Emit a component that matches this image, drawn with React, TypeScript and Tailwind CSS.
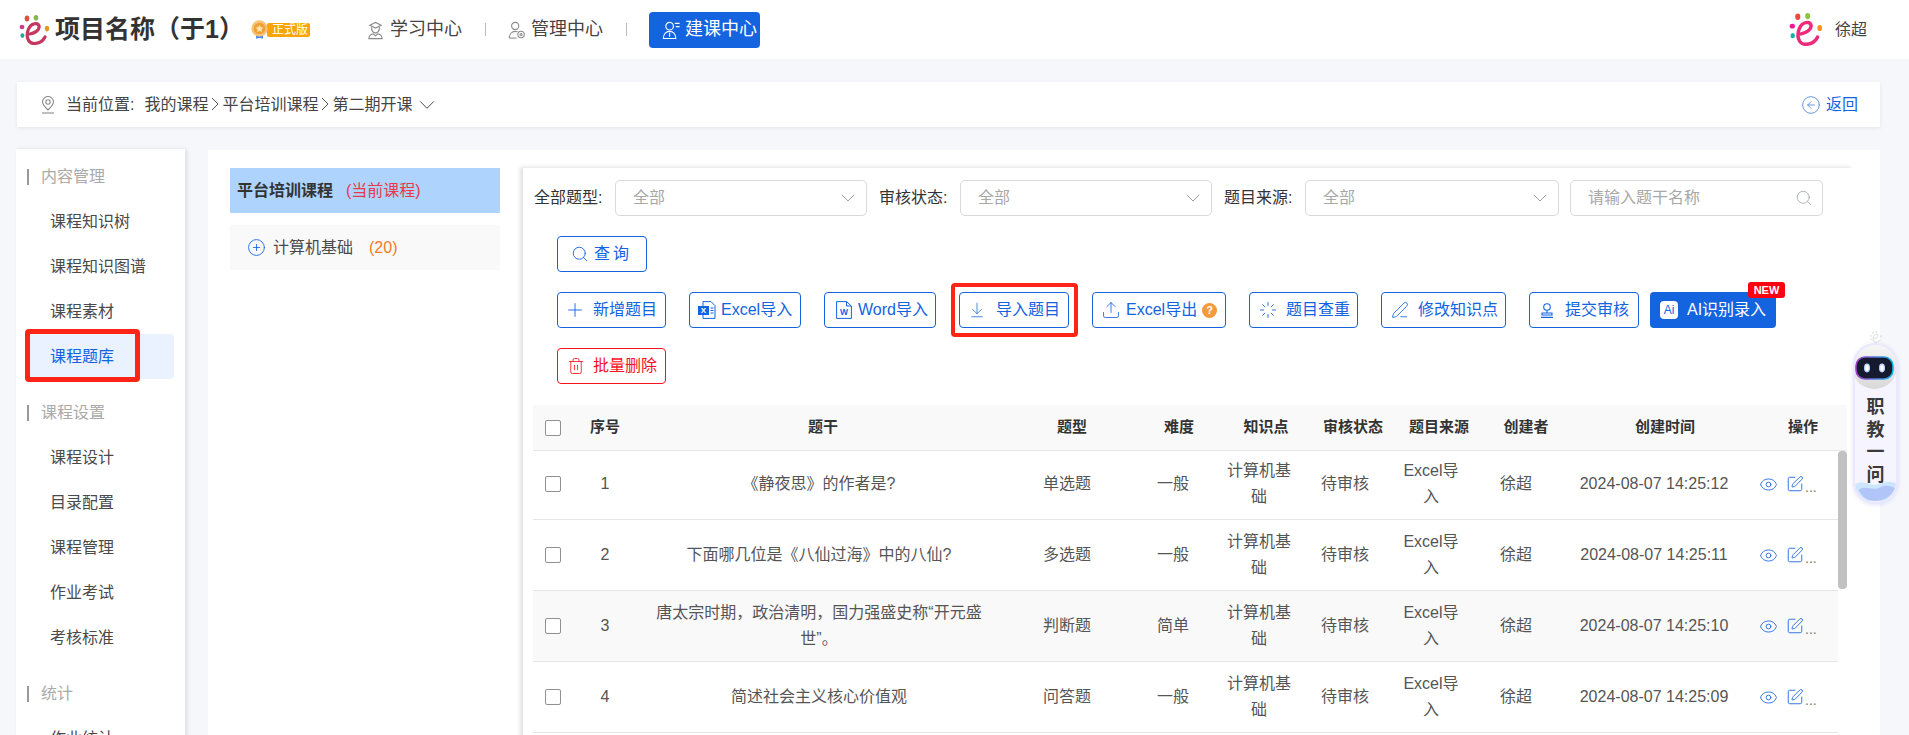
import { ArrowDownToLine, ChevronDown, CircleArrowLeft, CirclePlus, Eye, Loader, PenLine, Plus, Search, SquarePen, Trash2, Upload } from "lucide-react"

function Logo({ main, dots }: { main: string; dots: string[] }) {
    return (
        <svg viewBox="0 0 31 30" className="h-full w-full">
            <ellipse cx="8" cy="3.4" rx="2.3" ry="3" fill={dots[0]} />
            <ellipse cx="17" cy="2.8" rx="2.3" ry="2.8" fill={dots[1]} />
            <ellipse cx="3" cy="12" rx="2.4" ry="2.2" fill={dots[2]} />
            <ellipse cx="3.4" cy="20.6" rx="2" ry="2.4" fill={dots[3]} />
            <ellipse cx="28" cy="13.6" rx="2.2" ry="2.8" fill={dots[4]} />
            <path d="M11 19 C16 18 21 15 20 11 C19 7 12 8 9.5 14 C6.5 21 9 28.5 15 28.5 C20 28.5 24 26 26 22" fill="none" stroke={main} strokeWidth="3.2" strokeLinecap="round" />
        </svg>
    )
}

function Medal() {
    return (
        <svg viewBox="0 0 28 28" className="h-full w-full">
            <path d="M9 22 L9 27.5 L14 26 L19 27.5 L19 22 Z" fill="#3b82f6" />
            <circle cx="14" cy="12.5" r="12" fill="#f7c27a" />
            <circle cx="14" cy="12.5" r="8.5" fill="#f0a030" />
            <path d="M14 7 L15.8 10.7 L19.8 11.2 L16.9 13.9 L17.6 17.9 L14 16 L10.4 17.9 L11.1 13.9 L8.2 11.2 L12.2 10.7 Z" fill="#ffe3ad" />
        </svg>
    )
}

function StudyIcon() {
    return (
        <svg viewBox="0 0 18 20" className="h-[20px] w-[17px]" fill="none" stroke="#8a8a8a" strokeWidth="1.2">
            <path d="M3 5 L9 2 L15 5 L9 8 Z" />
            <path d="M5 7 C4.5 11 6.5 13 9 13 C11.5 13 13.5 11 13 7" />
            <path d="M2 19.2 C2 15.6 5 14.4 6.5 14 L9 16 L11.5 14 C13 14.4 16 15.6 16 19.2 Z" />
        </svg>
    )
}

function ManageIcon() {
    return (
        <svg viewBox="0 0 20 20" className="h-[20px] w-[19px]" fill="none" stroke="#8a8a8a" strokeWidth="1.2">
            <circle cx="8" cy="5.5" r="4" />
            <path d="M1.5 19 C1.5 14 4.5 11.5 8 11.5 C9 11.5 9.8 11.7 10.6 12" />
            <path d="M1.5 19 L9.5 19" />
            <circle cx="14.5" cy="15" r="3.6" />
            <circle cx="14.5" cy="15" r="1.2" />
        </svg>
    )
}

function BuildIcon() {
    return (
        <svg viewBox="0 0 20 20" className="h-[20px] w-[19px]" fill="none" stroke="#fff" strokeWidth="1.2">
            <circle cx="8" cy="6" r="4" />
            <path d="M1.5 19 C1.5 14 4.5 11.5 8 11.5 C11.5 11.5 14.5 14 14.5 19 Z" />
            <path d="M8 13 L8 17" />
            <path d="M13.5 3 L18.5 3 M14.5 6.5 L18.5 6.5" />
        </svg>
    )
}

function LocationIcon() {
    return (
        <svg viewBox="0 0 16 18" className="h-[18px] w-[16px]" fill="none" stroke="#8a8a8a" strokeWidth="1.1">
            <path d="M8 14 C4.5 10.5 2.5 8.4 2.5 6 A5.5 5.5 0 0 1 13.5 6 C13.5 8.4 11.5 10.5 8 14 Z" />
            <circle cx="8" cy="6" r="2.2" />
            <path d="M2 17 L14 17" />
        </svg>
    )
}

function Crumb() {
    return (
        <svg viewBox="0 0 14 16" className="h-[16px] w-[14px]" fill="none" stroke="#555" strokeWidth="1">
            <path d="M4 1 L10 7 L4 13" />
        </svg>
    )
}

function ExcelIcon() {
    return (
        <svg viewBox="0 0 18 18" className="h-[18px] w-[18px]">
            <path d="M5 .6 H13 L17 4.6 V17.4 H5 Z" fill="none" stroke="#1463df" strokeWidth="1" />
            <rect x="0" y="5" width="11" height="9" fill="#1463df" />
            <text x="5.5" y="12.4" textAnchor="middle" fontSize="8" fontWeight="700" fill="#fff">X</text>
            <path d="M12.5 7 H15.5 M12.5 9.5 H15.5 M12.5 12 H15.5" stroke="#1463df" strokeWidth="1" />
        </svg>
    )
}

function WordIcon() {
    return (
        <svg viewBox="0 0 16 18" className="h-[18px] w-[16px]">
            <path d="M.6 .6 H10.5 L15.4 5 V17.4 H.6 Z M10.5 .6 V5 H15.4" fill="none" stroke="#1463df" strokeWidth="1" />
            <text x="8" y="14.4" textAnchor="middle" fontSize="8.5" fontWeight="700" fill="#1463df">W</text>
        </svg>
    )
}

function StampIcon() {
    return (
        <svg viewBox="0 0 14 15" className="h-[15px] w-[14px]" fill="none" stroke="#1463df" strokeWidth="1.1">
            <circle cx="7" cy="4" r="3.3" />
            <path d="M7 7.4 L7 10 M2 10 H12 V12 H2 Z M1 14.4 H13" />
        </svg>
    )
}

function Robot() {
    return (
        <div className="absolute left-[1853px] top-[331px] flex w-[45px] flex-col items-center">
            <div className="h-[12px] w-[14px] opacity-30">
                <Logo main="#aaa" dots={["#aaa", "#aaa", "#aaa", "#aaa", "#aaa"]} />
            </div>
            <div className="relative flex h-[161px] w-[45px] flex-col items-center overflow-hidden rounded-full border-2 border-[#e9e8ff] bg-[#f6f5ff] shadow-[0_1px_4px_rgba(110,110,220,0.2)]">
                <svg viewBox="0 0 45 45" className="h-[45px] w-[45px] shrink-0">
                    <defs>
                        <linearGradient id="head" x1="0" y1="0" x2="0" y2="1">
                            <stop offset="0" stopColor="#f7f7f7" />
                            <stop offset="1" stopColor="#d9d9d9" />
                        </linearGradient>
                        <linearGradient id="rim" x1="0" y1="0" x2="1" y2="0">
                            <stop offset="0" stopColor="#a63fc9" />
                            <stop offset="1" stopColor="#12b5ee" />
                        </linearGradient>
                    </defs>
                    <circle cx="21.5" cy="21.5" r="22.5" fill="url(#head)" />
                    <rect x="3" y="12" width="37" height="22" rx="9" fill="#151a2e" stroke="url(#rim)" strokeWidth="1.6" />
                    <ellipse cx="14" cy="23" rx="3" ry="4.4" fill="#bcd6ff" />
                    <ellipse cx="14" cy="23" rx="1.7" ry="3" fill="#fff" />
                    <ellipse cx="29" cy="23" rx="3" ry="4.4" fill="#bcd6ff" />
                    <ellipse cx="29" cy="23" rx="1.7" ry="3" fill="#fff" />
                </svg>
                <div className="relative z-10 mt-[6px] flex flex-col items-center text-[18px] font-bold leading-[22.6px] text-[#3a3a3a]">
                    <span>职</span>
                    <span>教</span>
                    <span>一</span>
                    <span>问</span>
                </div>
                <svg viewBox="0 0 45 24" className="absolute bottom-0 left-0 h-[24px] w-[41px]">
                    <path d="M0 6 C10 0 16 8 24 6 C32 4 38 1 45 5 L45 24 L0 24 Z" fill="#bde0fc" opacity="0.75" />
                    <path d="M4 12 C12 6 20 14 28 9 C34 6 40 8 44 10 C40 20 30 24 22 24 C14 24 8 20 4 12 Z" fill="#a6b6f7" opacity="0.7" />
                </svg>
            </div>
        </div>
    )
}

const groups = [
    { title: "内容管理", items: ["课程知识树", "课程知识图谱", "课程素材", "课程题库"] },
    { title: "课程设置", items: ["课程设计", "目录配置", "课程管理", "作业考试", "考核标准"] },
    { title: "统计", items: ["作业统计"] },
]

const rows = [
    { id: 1, stem: "《静夜思》的作者是?", type: "单选题", level: "一般", time: "2024-08-07 14:25:12" },
    { id: 2, stem: "下面哪几位是《八仙过海》中的八仙?", type: "多选题", level: "一般", time: "2024-08-07 14:25:11" },
    { id: 3, stem: "唐太宗时期，政治清明，国力强盛史称“开元盛世”。", type: "判断题", level: "简单", time: "2024-08-07 14:25:10" },
    { id: 4, stem: "简述社会主义核心价值观", type: "问答题", level: "一般", time: "2024-08-07 14:25:09" },
]

function FilterSelect({ label, className }: { label: string; className: string }) {
    return (
        <>
            <span className="w-[81px] shrink-0 text-[#333]">{label}</span>
            <div className={`flex h-[36px] shrink-0 items-center justify-between rounded-[5px] border border-[#d9d9d9] pl-[17px] pr-[6px] text-[#a8a8a8] ${className}`}>
                <span>全部</span>
                <ChevronDown className="h-[24px] w-[24px] text-[#9a9fa8]" strokeWidth={1} />
            </div>
        </>
    )
}

function Btn({ className, children }: { className: string; children: React.ReactNode }) {
    return (
        <button className={`flex h-[36px] shrink-0 items-center rounded-[4px] border border-[#1463df] text-[#1463df] ${className}`}>
            {children}
        </button>
    )
}

export default function App() {
    return (
        <div className="relative h-screen overflow-hidden bg-[#f5f7fb] font-['Liberation_Sans','Noto_Sans_CJK_SC',sans-serif] text-[16px]">
            {/* Header */}
            <header className="flex h-[59px] items-center bg-white">
                <div className="ml-[19px] h-[30px] w-[31px] shrink-0">
                    <Logo main="#c4385f" dots={["#e0503f", "#86b64a", "#d13a8a", "#2ba79a", "#e39a1e"]} />
                </div>
                <span className="ml-[5px] w-[176px] shrink-0 whitespace-nowrap text-[25px] font-bold leading-none text-[#333]">项目名称（于1）</span>
                <div className="relative ml-[19px] h-[14px] w-[60px] shrink-0">
                    <div className="absolute left-[17px] top-0 flex h-[14px] w-[43px] items-center justify-center rounded-[2px] bg-[#fba505] pl-[3px] text-[12px] leading-none text-white">正式版</div>
                    <div className="absolute -top-[3px] left-0 h-[19px] w-[19px]"><Medal /></div>
                </div>
                <div className="ml-[57px] flex w-[95px] shrink-0 items-center gap-[6px] text-[18px] text-[#444]">
                    <StudyIcon />
                    <span className="whitespace-nowrap">学习中心</span>
                </div>
                <div className="ml-[23px] h-[13px] w-px bg-[#bbb]" />
                <div className="ml-[22px] flex w-[95px] shrink-0 items-center gap-[5px] text-[18px] text-[#444]">
                    <ManageIcon />
                    <span className="whitespace-nowrap">管理中心</span>
                </div>
                <div className="ml-[23px] h-[13px] w-px bg-[#bbb]" />
                <div className="ml-[22px] flex h-[36px] w-[111px] shrink-0 items-center gap-[4px] rounded-[4px] bg-[#1463df] pl-[13px] text-[18px] text-white">
                    <BuildIcon />
                    <span className="whitespace-nowrap">建课中心</span>
                </div>
                <div className="ml-auto flex items-center pr-[42px]">
                    <div className="h-[33px] w-[34px]">
                        <Logo main="#ee2a7b" dots={["#f0473a", "#8cc63f", "#ec1c94", "#0db5a0", "#f7931e"]} />
                    </div>
                    <span className="ml-[12px] text-[#444]">徐超</span>
                </div>
            </header>

            {/* Breadcrumb */}
            <div className="ml-[17px] mt-[23px] flex h-[45px] w-[1863px] items-center bg-white pl-[23px] text-[#444] shadow-[0_1px_4px_rgba(0,0,0,0.08)]">
                <LocationIcon />
                <span className="ml-[10px]">当前位置:</span>
                <span className="ml-[10px]">我的课程</span>
                <Crumb />
                <span>平台培训课程</span>
                <Crumb />
                <span>第二期开课</span>
                <ChevronDown className="ml-px h-[26px] w-[26px]" strokeWidth={0.9} />
                <div className="ml-auto flex items-center gap-[5px] pr-[22px] text-[#1463df]">
                    <CircleArrowLeft className="h-[20px] w-[20px] text-[#5b8fd8]" strokeWidth={1.1} />
                    <span>返回</span>
                </div>
            </div>

            <div className="mt-[22px] flex items-start pl-[16px]">
                {/* Sidebar */}
                <aside className="h-[600px] w-[169px] shrink-0 bg-white pt-[5px] shadow-[2px_0_4px_rgba(0,0,0,0.1)]">
                    {groups.map((group, i) => (
                        <div key={group.title} className={i > 0 ? "mt-[11px]" : ""}>
                            <div className="flex h-[45px] items-center pl-[11px] text-[#aaa]">
                                <span className="mr-[12px] h-[16px] w-[2px] bg-[#999]" />
                                {group.title}
                            </div>
                            {group.items.map((item) =>
                                item === "课程题库" ? (
                                    <div key={item} className="relative ml-[11px] flex h-[45px] w-[147px] items-center rounded-[4px] bg-[#e9f2fe] pl-[23px] text-[#1463df]">
                                        {item}
                                        <div className="absolute -left-[2px] -top-[5px] h-[53px] w-[115px] rounded-[4px] border-[5px] border-[#ff2516]" />
                                    </div>
                                ) : (
                                    <div key={item} className="flex h-[45px] items-center pl-[34px] text-[#4a4a4a]">{item}</div>
                                )
                            )}
                        </div>
                    ))}
                </aside>

                <main className="ml-[23px] mt-px flex h-[600px] w-[1672px] shrink-0 items-start bg-white pl-[22px] pt-[18px]">
                    {/* Course tree */}
                    <div className="w-[270px] shrink-0">
                        <div className="flex h-[45px] items-center bg-[#aed4fe] pl-[7px]">
                            <span className="font-bold text-[#333]">平台培训课程</span>
                            <span className="ml-[13px] text-[#e6394a]">(当前课程)</span>
                        </div>
                        <div className="mt-[12px] flex h-[45px] items-center bg-[#f9f9f9] pl-[17px] text-[#4a4a4a]">
                            <CirclePlus className="h-[19px] w-[19px] text-[#1463df]" strokeWidth={1.1} />
                            <span className="ml-[7px]">计算机基础</span>
                            <span className="ml-[16px] text-[#f57a1f]">(20)</span>
                        </div>
                    </div>

                    {/* Question bank */}
                    <div className="ml-[23px] h-[600px] w-[1331px] shrink-0 bg-white pt-[12px] shadow-[-3px_-1px_4px_rgba(0,0,0,0.12)]">
                        <div className="flex items-center pl-[11px]">
                            <FilterSelect label="全部题型:" className="w-[252px]" />
                            <div className="w-[12px] shrink-0" />
                            <FilterSelect label="审核状态:" className="w-[252px]" />
                            <div className="w-[12px] shrink-0" />
                            <FilterSelect label="题目来源:" className="w-[254px]" />
                            <div className="ml-[11px] flex h-[36px] w-[253px] shrink-0 items-center justify-between rounded-[5px] border border-[#d9d9d9] pl-[17px] pr-[9px] text-[#a8a8a8]">
                                <span>请输入题干名称</span>
                                <Search className="h-[18px] w-[18px] text-[#9a9fa8]" strokeWidth={1} />
                            </div>
                        </div>

                        <div className="ml-[34px] mt-[20px]">
                            <Btn className="w-[90px] pl-[13px]">
                                <Search className="h-[18px] w-[18px]" strokeWidth={1.2} />
                                <span className="ml-[5px] tracking-[3px]">查询</span>
                            </Btn>
                            <div className="relative mt-[20px] flex items-center gap-[23px]">
                                <Btn className="w-[109px] pl-[6px]">
                                    <Plus className="h-[22px] w-[22px]" strokeWidth={1} />
                                    <span className="ml-[7px]">新增题目</span>
                                </Btn>
                                <Btn className="w-[112px] pl-[8px]">
                                    <ExcelIcon />
                                    <span className="ml-[5px]">Excel导入</span>
                                </Btn>
                                <Btn className="w-[112px] pl-[11px]">
                                    <WordIcon />
                                    <span className="ml-[6px]">Word导入</span>
                                </Btn>
                                <div className="relative shrink-0">
                                    <Btn className="w-[110px] pl-[8px]">
                                        <ArrowDownToLine className="h-[18px] w-[18px]" strokeWidth={1} />
                                        <span className="ml-[10px]">导入题目</span>
                                    </Btn>
                                    <div className="absolute -left-[8px] -top-[9px] h-[54px] w-[127px] rounded-[4px] border-[4px] border-[#ff2516]" />
                                </div>
                                <Btn className="w-[134px] pl-[8px]">
                                    <Upload className="h-[20px] w-[20px]" strokeWidth={1} />
                                    <span className="ml-[5px]">Excel导出</span>
                                    <span className="ml-[5px] flex h-[15px] w-[15px] items-center justify-center rounded-full bg-[#f59a3c] text-[11px] font-bold leading-none text-white">?</span>
                                </Btn>
                                <Btn className="w-[109px] pl-[9px]">
                                    <Loader className="h-[18px] w-[18px]" strokeWidth={1.2} />
                                    <span className="ml-[9px]">题目查重</span>
                                </Btn>
                                <Btn className="w-[125px] pl-[9px]">
                                    <PenLine className="h-[18px] w-[18px]" strokeWidth={1.1} />
                                    <span className="ml-[9px]">修改知识点</span>
                                </Btn>
                                <Btn className="w-[110px] pl-[10px]">
                                    <StampIcon />
                                    <span className="ml-[11px]">提交审核</span>
                                </Btn>
                                <div className="relative -ml-[12px] flex h-[36px] w-[126px] shrink-0 items-center rounded-[4px] bg-[#1463df] pl-[10px] text-white">
                                    <span className="flex h-[18px] w-[18px] items-center justify-center rounded-[4px] bg-white text-[12px] leading-none text-[#1463df]">Ai</span>
                                    <span className="ml-[9px]">AI识别录入</span>
                                    <span className="absolute -top-[10px] left-[98px] flex h-[16px] w-[37px] items-center justify-center rounded-[3px] bg-[#ff0012] text-[11px] font-bold leading-none text-white">NEW</span>
                                </div>
                            </div>
                            <Btn className="mt-[20px] w-[109px] border-[#f5121f] pl-[9px] text-[#f5121f]">
                                <Trash2 className="h-[18px] w-[18px]" strokeWidth={1.1} />
                                <span className="ml-[8px]">批量删除</span>
                            </Btn>
                        </div>

                        {/* Table */}
                        <div className="ml-[10px] mt-[21px] w-[1314px]">
                            <div className="relative z-10 grid h-[46px] grid-cols-[40px_64px_372px_126px_88px_86px_88px_84px_90px_188px_88px] items-center border-b border-[#e5e5e5] bg-[#f9f9f9] text-center text-[15px] font-bold text-[#333]">
                                <span className="ml-[12px] block h-[16px] w-[16px] rounded-[2px] border border-[#909090] bg-white" />
                                <span>序号</span>
                                <span>题干</span>
                                <span>题型</span>
                                <span>难度</span>
                                <span>知识点</span>
                                <span>审核状态</span>
                                <span>题目来源</span>
                                <span>创建者</span>
                                <span>创建时间</span>
                                <span>操作</span>
                            </div>
                            <div className="relative -mt-[2px]">
                                {rows.map((row) => (
                                    <div
                                        key={row.id}
                                        className={`grid h-[71px] w-[1305px] grid-cols-[40px_64px_364px_132px_80px_92px_80px_92px_78px_198px_85px] items-center border-b border-[#e5e5e5] text-center leading-[26px] text-[#555] ${row.id === 3 ? "bg-[#f9f9f9]" : "bg-white"}`}
                                    >
                                        <span className="ml-[12px] block h-[16px] w-[16px] rounded-[2px] border border-[#909090] bg-white" />
                                        <span>{row.id}</span>
                                        <span className="px-[16px]">{row.stem}</span>
                                        <span>{row.type}</span>
                                        <span>{row.level}</span>
                                        <span className="px-[12px]">计算机基础</span>
                                        <span>待审核</span>
                                        <span className="px-[12px]">Excel导入</span>
                                        <span>徐超</span>
                                        <span className="whitespace-nowrap">{row.time}</span>
                                        <div className="flex items-center pl-[6px]">
                                            <Eye className="h-[19px] w-[19px] text-[#2f74e4]" strokeWidth={1.2} />
                                            <SquarePen className="ml-[8px] h-[18px] w-[18px] text-[#2f74e4]" strokeWidth={1.3} />
                                            <span className="ml-px self-end text-[14px] leading-[14px] text-[#777]">...</span>
                                        </div>
                                    </div>
                                ))}
                                <div className="absolute left-[1305px] top-[2px] h-[138px] w-[9px] rounded-[4px] bg-[#c1c1c1]" />
                            </div>
                        </div>
                    </div>
                </main>
            </div>

            <Robot />
        </div>
    )
}
